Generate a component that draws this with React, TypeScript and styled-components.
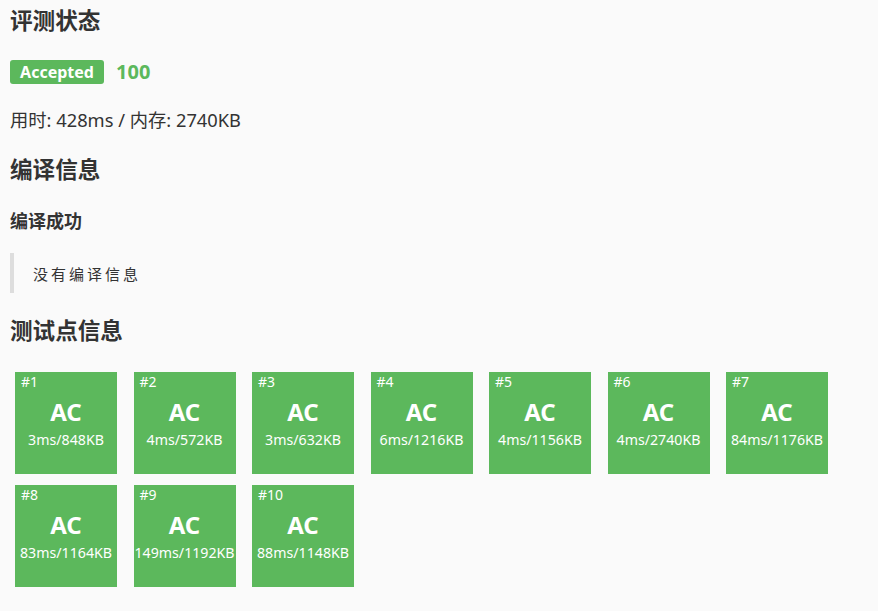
import styled, { createGlobalStyle } from "styled-components";

const GlobalStyle = createGlobalStyle`
  html, body {
    margin: 0;
    padding: 0;
    background: #fafafa;
  }
  body {
    font-family: "Noto Sans", "Noto Sans CJK SC", sans-serif;
    color: #333;
  }
`;

interface ICase {
  time: string;
  memory: string;
}

const cases: ICase[] = [
  { time: "3ms", memory: "848KB" },
  { time: "4ms", memory: "572KB" },
  { time: "3ms", memory: "632KB" },
  { time: "6ms", memory: "1216KB" },
  { time: "4ms", memory: "1156KB" },
  { time: "4ms", memory: "2740KB" },
  { time: "84ms", memory: "1176KB" },
  { time: "83ms", memory: "1164KB" },
  { time: "149ms", memory: "1192KB" },
  { time: "88ms", memory: "1148KB" },
];

export default function App() {
  return (
    <>
      <GlobalStyle />
      <Page>
        <Title $top={0}>评测状态</Title>
        <StatusRow>
          <Badge>Accepted</Badge>
          <Score>100</Score>
        </StatusRow>
        <Usage>用时: 428ms / 内存: 2740KB</Usage>
        <Title $top={25}>编译信息</Title>
        <SubTitle>编译成功</SubTitle>
        <Quote>没有编译信息</Quote>
        <Title $top={25}>测试点信息</Title>
        <CaseGrid>
          {cases.map((c, i) => (
            <CaseCard key={i}>
              <CaseNo>#{i + 1}</CaseNo>
              <CaseStatus>AC</CaseStatus>
              <CaseDetail>
                {c.time}/{c.memory}
              </CaseDetail>
            </CaseCard>
          ))}
        </CaseGrid>
      </Page>
    </>
  );
}

const Page = styled.div`
  display: flex;
  flex-direction: column;
  align-items: flex-start;
  padding: 8px 10px 20px;
`;

const Title = styled.h2<{ $top: number }>`
  margin: ${({ $top }) => $top}px 0 0;
  font-size: 22.6px;
  line-height: 26px;
  font-weight: 700;
  color: #333;
`;

const StatusRow = styled.div`
  display: flex;
  align-items: center;
  gap: 12px;
  margin-top: 26px;
`;

const Badge = styled.span`
  display: inline-flex;
  align-items: center;
  justify-content: center;
  width: 94px;
  height: 24px;
  border-radius: 3px;
  background: #5cb85c;
  color: #fff;
  font-size: 16px;
  font-weight: 700;
`;

const Score = styled.span`
  color: #5cb85c;
  font-size: 20px;
  font-weight: 700;
  line-height: 24px;
`;

const Usage = styled.div`
  margin-top: 24px;
  font-size: 18.3px;
  line-height: 24px;
`;

const SubTitle = styled.h4`
  margin: 26px 0 0;
  font-size: 18px;
  line-height: 24px;
  font-weight: 700;
`;

const Quote = styled.blockquote`
  margin: 20px 0 0;
  height: 40px;
  box-sizing: border-box;
  display: flex;
  align-items: center;
  padding-left: 19px;
  border-left: 4px solid #ddd;
  font-family: "Noto Sans CJK SC", monospace;
  font-size: 15px;
  letter-spacing: 3px;
  color: #333;
`;

const CaseGrid = styled.div`
  display: grid;
  grid-template-columns: repeat(7, 102px);
  column-gap: 16.5px;
  row-gap: 11px;
  margin-top: 28px;
  padding-left: 5px;
`;

const CaseCard = styled.div`
  display: flex;
  flex-direction: column;
  align-items: center;
  width: 102px;
  height: 102px;
  box-sizing: border-box;
  padding: 2px 6px;
  background: #5cb85c;
  color: #fff;
`;

const CaseNo = styled.div`
  align-self: flex-start;
  font-size: 14px;
  line-height: 16px;
`;

const CaseStatus = styled.div`
  margin-top: 8px;
  font-size: 24px;
  line-height: 28px;
  font-weight: 700;
`;

const CaseDetail = styled.div`
  margin-top: 5px;
  font-size: 14.2px;
  line-height: 18px;
  white-space: nowrap;
`;
